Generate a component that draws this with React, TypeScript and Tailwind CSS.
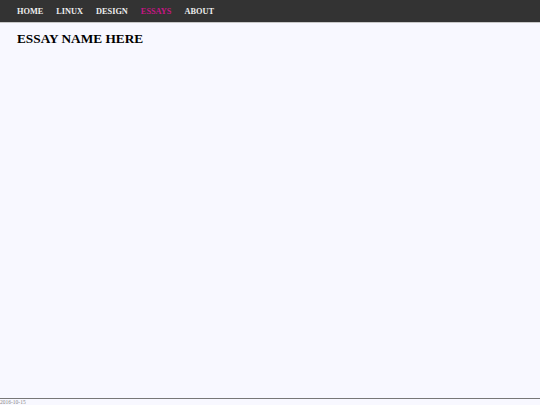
export default function App() {
  const links = ['HOME', 'LINUX', 'DESIGN', 'ESSAYS', 'ABOUT']
  return (
    <div className="flex h-[405px] flex-col bg-[#f8f8ff] font-['Liberation_Serif',serif]">
      <nav className="flex h-[23px] items-center gap-[13px] border-b border-[#c8c8c8] bg-[#333333] px-[17px] pt-[2px]">
        {links.map((l) => (
          <a
            key={l}
            className={`text-[8.3px] font-bold ${l === 'ESSAYS' ? 'text-[#c71585]' : 'text-[#eeeeee]'}`}
          >
            {l}
          </a>
        ))}
      </nav>
      <main className="flex-1 px-[17px] pt-[6px]">
        <h1 className="text-[13.3px] font-bold leading-[20px] text-black">ESSAY NAME HERE</h1>
      </main>
      <footer className="h-[7px] border-t border-[#777777] text-[5.5px] leading-[6px] text-[#888888]">
        2016-10-15
      </footer>
    </div>
  )
}
